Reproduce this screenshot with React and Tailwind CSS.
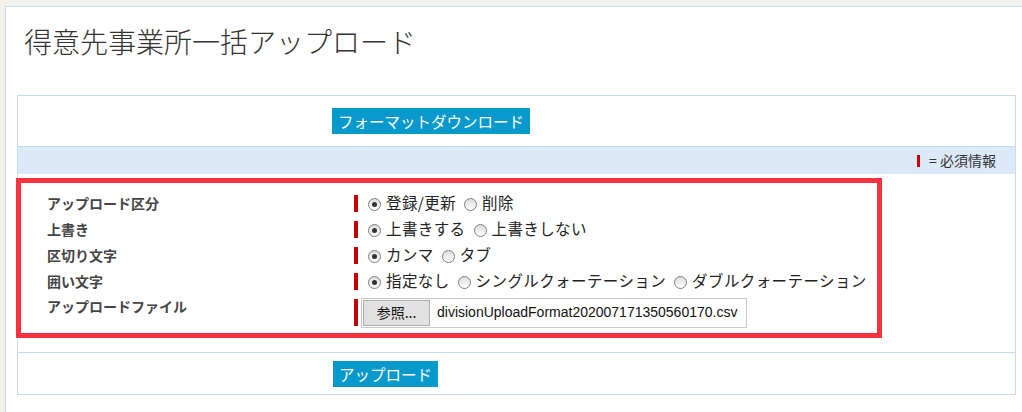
const jp = { fontFamily: '"Noto Sans CJK JP", "Noto Sans", sans-serif' };

function Radio({ checked, label, first }) {
  return (
    <label className={`flex items-center ${first ? '' : 'ml-[8px]'}`}>
      <span className="mt-[3px] mr-[5px] flex h-[13px] w-[13px] items-center justify-center rounded-full border border-[#7d7d7d] bg-gradient-to-b from-[#dcdcdc] to-white">
        {checked && <span className="h-[5px] w-[5px] rounded-full bg-[#333]" />}
      </span>
      <span>{label}</span>
    </label>
  );
}

const rows = [
  { label: 'アップロード区分', options: ['登録/更新', '削除'] },
  { label: '上書き', options: ['上書きする', '上書きしない'] },
  { label: '区切り文字', options: ['カンマ', 'タブ'] },
  { label: '囲い文字', options: ['指定なし', 'シングルクォーテーション', 'ダブルクォーテーション'] },
];

export default function App() {
  return (
    <div className="h-[412px] overflow-hidden bg-[#f2f1ec] pl-[5px] pt-[6px]" style={jp}>
      <div className="h-[420px] border-l border-t border-[#c1d9f1] bg-white pl-[11px]">
        <h1 className="mt-[14px] pl-[7px] text-[28px] font-light leading-[40px] text-[#333]">
          得意先事業所一括アップロード
        </h1>

        <div className="mt-[34px] w-[999px] border border-[#c5dbf1]">
          <div className="flex h-[51px] items-center border-b border-[#c5dbf1] pl-[314px]">
            <button className="h-[26px] bg-[#0799cc] px-[6px] text-[15.5px] leading-[26px] text-white">
              フォーマットダウンロード
            </button>
          </div>

          <div className="flex h-[27px] items-center justify-end bg-[#dbe9f8] pr-[19px] text-[14px] text-[#333]">
            <span className="mr-[9px] h-[12px] w-[3px] bg-[#cc0000]" />
            <span>= 必須情報</span>
          </div>

          <div className="border-b border-[#c5dbf1] pb-[14px] pt-[4px]">
            <div className="-ml-[2px] w-[866px] border-[5px] border-[#f7323f] pb-[4px] pt-[7px]">
              {rows.map((r) => (
                <div key={r.label} className="flex h-[26px] items-center">
                  <div className="w-[333px] pl-[26px] text-[14px] font-bold text-[#444]">{r.label}</div>
                  <div className="flex h-[17px] items-center border-l-4 border-[#cc0000] pl-[10px] text-[15.5px] tracking-[0.4px] text-[#222]">
                    {r.options.map((o, i) => (
                      <Radio key={o} label={o} checked={i === 0} first={i === 0} />
                    ))}
                  </div>
                </div>
              ))}
              <div className="flex h-[35px] items-start pt-[5px]">
                <div className="-mt-[2px] w-[333px] pl-[26px] text-[14px] font-bold leading-[18px] text-[#444]">
                  アップロードファイル
                </div>
                <div className="flex h-[27px] items-center border-l-4 border-[#cc0000] pl-[3px]">
                  <div className="flex h-[30px] w-[386px] items-center border border-[#c9c9c9] p-[1px]">
                    <span className="flex h-[26px] w-[67px] items-center justify-center border border-[#adadad] bg-[#e1e1e1] text-[14px] text-[#111]">
                      参照...
                    </span>
                    <span
                      className="ml-[7px] text-[14px] text-[#111]"
                      style={{ fontFamily: '"Liberation Sans", Arial, sans-serif' }}
                    >
                      divisionUploadFormat202007171350560170.csv
                    </span>
                  </div>
                </div>
              </div>
            </div>
          </div>

          <div className="h-[41px] pl-[315px] pt-[8px]">
            <button className="h-[26px] bg-[#0799cc] px-[6px] text-[15.5px] leading-[26px] text-white">
              アップロード
            </button>
          </div>
        </div>
      </div>
    </div>
  );
}
